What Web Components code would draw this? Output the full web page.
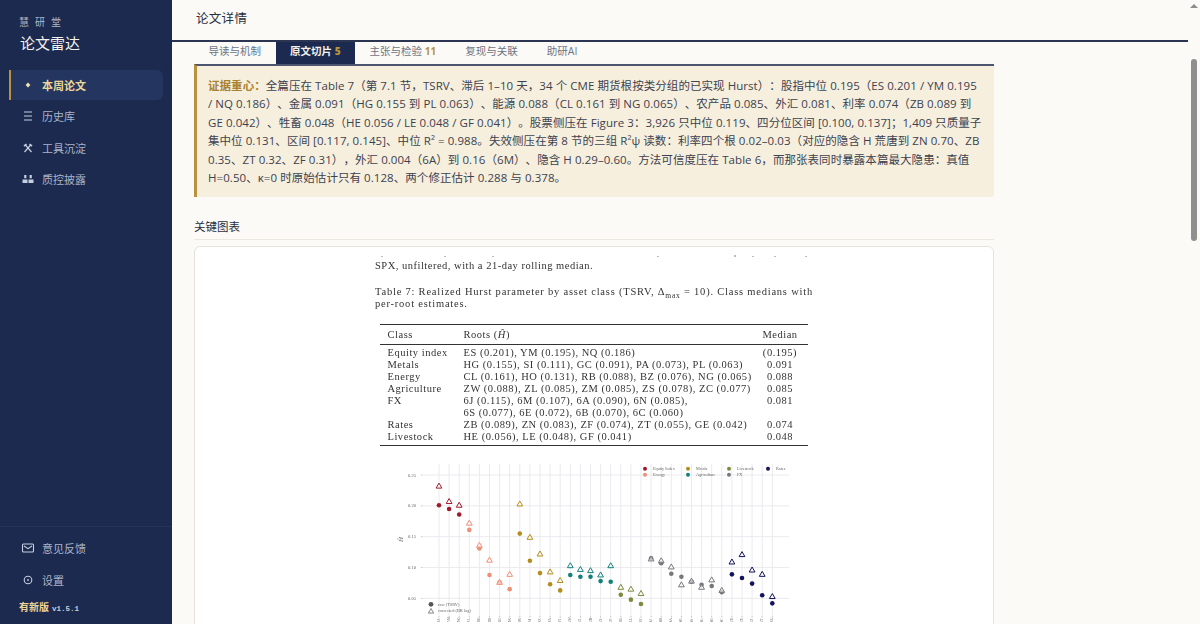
<!DOCTYPE html>
<html lang="zh">
<head>
<meta charset="utf-8">
<title>论文雷达</title>
<style>
  html, body { margin: 0; height: 100%; overflow: hidden; }
  body { font-family: "Open Sans", "Noto Sans CJK SC", sans-serif; text-spacing-trim: space-all; }
</style>
</head>
<body>
<app-shell>
  <side-bar slot="side"></side-bar>
  <page-header slot="main"></page-header>
  <tab-bar slot="main"></tab-bar>
  <evidence-note slot="main"></evidence-note>
  <section-title slot="main">关键图表</section-title>
  <figure-card slot="main"></figure-card>
</app-shell>

<script>
const SERIF = `"Liberation Serif", "Noto Sans CJK SC", serif`;

class AppShell extends HTMLElement {
  constructor() {
    super();
    this.attachShadow({ mode: 'open' }).innerHTML = `
      <style>
        :host { display: flex; height: 624px; background: #fbfaf7; }
        .side { flex: 0 0 172px; display: flex; }
        .main { flex: 1; min-width: 0; overflow: hidden; display: flex; flex-direction: column; }
        ::slotted(*) { flex: none; }
        .bar { flex: 0 0 12px; }
        .up { width: 0; height: 0; border: 4px solid transparent; border-top: 0; border-bottom-color: #8c8c8c;
              margin: 4px auto 0; }
        .thumb { width: 6px; height: 182px; margin: 51px auto 0; border-radius: 3px; background: #8f8f8f; }
      </style>
      <div class="side"><slot name="side"></slot></div>
      <div class="main"><slot name="main"></slot></div>
      <div class="bar"><div class="up"></div><div class="thumb"></div></div>`;
  }
}

const NAV_ICONS = {
  star: `<path d="M7 4.6 9.4 7 7 9.4 4.6 7Z" fill="currentColor"/>`,
  list: `<path d="M3 3h8M3 7h8M3 11h8" stroke="currentColor" stroke-width="1.1" fill="none"/>`,
  tools: `<path d="M4 3.5 10.5 11M10 3.5 3.5 11" stroke="currentColor" stroke-width="1.2" fill="none"/><path d="M2.5 4.5 5 2.5 6 3.5 3.5 5.8ZM11.5 4.5 9 2.5 8 3.5 10.5 5.8Z" fill="currentColor"/>`,
  scale: `<path d="M3.2 3h2.2v3.2H3.2ZM8.6 3h2.2v3.2H8.6ZM1.5 7.4h5V11h-5ZM7.5 7.4h5V11h-5Z" fill="currentColor"/>`,
  mail: `<rect x="1.5" y="3" width="11" height="8" rx="1" stroke="currentColor" stroke-width="1.1" fill="none"/><path d="M3 5 7 7.6 11 5" stroke="currentColor" stroke-width="1.1" fill="none"/>`,
  gear: `<circle cx="7" cy="7" r="3.8" stroke="currentColor" stroke-width="1.1" fill="none"/><circle cx="7" cy="7" r=".9" fill="currentColor"/>`
};

class NavItem extends HTMLElement {
  constructor() {
    super();
    const active = this.hasAttribute('active');
    this.attachShadow({ mode: 'open' }).innerHTML = `
      <style>
        :host { display: flex; align-items: center; gap: 7px; height: 30px; margin-bottom: 1.4px; padding-left: 10px;
                border-radius: 0 6px 6px 0; color: #a9b4cb; font-size: 11px; box-sizing: border-box; border-left: 2px solid transparent; }
        :host([active]) { background: #243660; border-left-color: #b8923e; color: #ecd596; font-weight: 700; }
        svg { width: 14px; height: 14px; flex: none; color: ${active ? '#f0e2b8' : '#c6cfe0'}; }
      </style>
      <svg viewBox="0 0 14 14">${NAV_ICONS[this.getAttribute('icon')]}</svg>
      <slot></slot>`;
  }
}

class SideBar extends HTMLElement {
  constructor() {
    super();
    this.attachShadow({ mode: 'open' }).innerHTML = `
      <style>
        :host { display: flex; flex-direction: column; width: 172px; height: 624px; background: #1b2a4e; box-sizing: border-box; }
        .brand { padding: 16px 20px 0 19px; height: 70px; box-sizing: border-box; }
        .org { font: 10px/13px ${SERIF}; letter-spacing: 6px; color: #aeb8cc; }
        .name { font: 15px/22px ${SERIF}; margin: 4px 0 0 1px; color: #f4f2ea; }
        nav { padding: 0 9px; }
        .foot { margin-top: auto; padding: 6px 9px 0; border-top: 1px solid #24345a; }
        .foot nav-item { margin-bottom: 2px; }
        .ver { padding: 5px 0 9px 10px; font: 700 7.5px/12px "Liberation Mono", monospace; color: #c9cdd6; }
        .ver b { font: 700 10px/12px ${SERIF}; color: #ecd596; margin-right: 3px; }
      </style>
      <div class="brand"><div class="org">慧研堂</div><div class="name">论文雷达</div></div>
      <nav>
        <nav-item icon="star" active>本周论文</nav-item>
        <nav-item icon="list">历史库</nav-item>
        <nav-item icon="tools">工具沉淀</nav-item>
        <nav-item icon="scale">质控披露</nav-item>
      </nav>
      <div class="foot">
        <nav-item icon="mail">意见反馈</nav-item>
        <nav-item icon="gear">设置</nav-item>
        <div class="ver"><b>有新版</b>v1.5.1</div>
      </div>`;
  }
}

class PageHeader extends HTMLElement {
  constructor() {
    super();
    this.attachShadow({ mode: 'open' }).innerHTML = `
      <style>
        :host { display: block; height: 42px; box-sizing: border-box; border-bottom: 2px solid #2b3552;
                padding: 10px 0 0 24px; font: 12.5px/18px ${SERIF}; letter-spacing: .3px; color: #2a2f3d; }
      </style>论文详情`;
  }
}

class TabBar extends HTMLElement {
  constructor() {
    super();
    const tabs = [['导读与机制'], ['原文切片', '5', 1], ['主张与检验', '11'], ['复现与关联'], ['助研AI']];
    this.attachShadow({ mode: 'open' }).innerHTML = `
      <style>
        :host { display: flex; height: 22px; margin-left: 22px; width: 800px; font-size: 10.5px; line-height: 19px; color: #6d7482; }
        div { padding: 0 14.5px; }
        .on { background: #1b2a4e; color: #f4f2ea; font-weight: 700; }
        b { color: #b8923e; font-size: 10px; }
      </style>
      ${tabs.map(t => `<div class="${t[2] ? 'on' : ''}">${t[0]}${t[1] ? ` <b>${t[1]}</b>` : ''}</div>`).join('')}`;
  }
}

class EvidenceNote extends HTMLElement {
  constructor() {
    super();
    this.attachShadow({ mode: 'open' }).innerHTML = `
      <style>
        :host { display: block; width: 800px; margin-left: 22px; box-sizing: border-box; height: 133px;
                background: #f6efde; border-top: 2px solid #4c566e; border-left: 3px solid #b8923e; border-radius: 0 0 3px 0;
                padding: 11px 11px; font-size: 11.5px; line-height: 18.4px; letter-spacing: .06px; white-space: nowrap; color: #3d424f; }
        b { color: #a9812f; }
      </style>
      <b>证据重心：</b>全篇压在 Table 7（第 7.1 节，TSRV、滞后 1–10 天，34 个 CME 期货根按类分组的已实现 Hurst）：股指中位 0.195（ES 0.201 / YM 0.195<br>/ NQ 0.186）、金属 0.091（HG 0.155 到 PL 0.063）、能源 0.088（CL 0.161 到 NG 0.065）、农产品 0.085、外汇 0.081、利率 0.074（ZB 0.089 到<br>GE 0.042）、牲畜 0.048（HE 0.056 / LE 0.048 / GF 0.041）。股票侧压在 Figure 3：3,926 只中位 0.119、四分位区间 [0.100, 0.137]；1,409 只质量子<br>集中位 0.131、区间 [0.117, 0.145]、中位 R² = 0.988。失效侧压在第 8 节的三组 R²ψ 读数：利率四个根 0.02–0.03（对应的隐含 H 荒唐到 ZN 0.70、ZB<br>0.35、ZT 0.32、ZF 0.31），外汇 0.004（6A）到 0.16（6M）、隐含 H 0.29–0.60。方法可信度压在 Table 6，而那张表同时暴露本篇最大隐患：真值<br>H=0.50、κ=0 时原始估计只有 0.128、两个修正估计 0.288 与 0.378。`;
  }
}

class SectionTitle extends HTMLElement {
  constructor() {
    super();
    this.attachShadow({ mode: 'open' }).innerHTML = `
      <style>
        :host { display: block; width: 800px; margin: 21px 0 6px 22px; height: 22px; box-sizing: border-box;
                border-bottom: 1px solid #ebe8e0; padding-top: 1px; font: 11.5px/17px ${SERIF}; color: #2a2f3d; }
      </style><slot></slot>`;
  }
}

// 图表数据：[根, 原始, 修正]，颜色按资产类
const SERIES = [
  ['#9e1b2c', [['ES', .201, .232], ['YM', .195, .207], ['NQ', .186, .201]]],
  ['#ee8f78', [['CL', .161, .172], ['HO', .131, .136], ['RB', .088, .112], ['BZ', .076, .076], ['NG', .065, .089]]],
  ['#b58d1c', [['HG', .155, .203], ['SI', .111, .149], ['GC', .091, .122], ['PA', .073, .093], ['PL', .063, .079]]],
  ['#14807a', [['ZW', .088, .103], ['ZL', .085, .097], ['ZM', .085, .095], ['ZS', .078, .088], ['ZC', .077, .103]]],
  ['#7e8a3e', [['HE', .056, .068], ['LE', .048, .065], ['GF', .041, .058]]],
  ['#77777e', [['6J', .115, .114], ['6M', .107, .111], ['6A', .090, .101], ['6N', .085, .072], ['6S', .077, .078], ['6E', .072, .068], ['6B', .070, .080], ['6C', .060, .063]]],
  ['#12125e', [['ZB', .089, .109], ['ZN', .083, .121], ['ZF', .074, .096], ['ZT', .055, .089], ['GE', .042, .053]]]
];

class HurstChart extends HTMLElement {
  constructor() {
    super();
    // 坐标相对卡片内的图：x0=图左边 380，y0=图顶 460
    const X0 = 380, Y0 = 460;
    const yOf = v => 476 + (0.25 - v) * 617 - Y0;
    const xOf = i => 438 + i * 10.1 - X0;
    let grid = '', dots = '', idx = 0;
    for (let i = 0; i < 34; i++) grid += `<path d="M${xOf(i)} 5V157" stroke="#e9e9ed" stroke-width=".9"/>`;
    for (const v of [.25, .2, .15, .1, .05]) {
      grid += `<path d="M${xOf(0) - 16} ${yOf(v)}H408" stroke="#e9e9ed" stroke-width=".9"/>
               <text x="27" y="${yOf(v) + 1.5}" font-size="4.6">${v.toFixed(2)}</text>
               <path d="M${xOf(0) - 18} ${yOf(v)}h1.5" stroke="#888" stroke-width=".5"/>`;
    }
    for (const [color, pts] of SERIES) {
      for (const [root, raw, cor] of pts) {
        const x = xOf(idx), y = yOf(cor);
        dots += `<circle cx="${x}" cy="${yOf(raw)}" r="2.3" fill="${color}"/>
                 <path d="M${x} ${y - 3}l2.9 5h-5.8Z" fill="#fff" fill-opacity=".55" stroke="${color}" stroke-width="1"/>`;
        grid += `<path d="M${x} 157v1.5" stroke="#888" stroke-width=".5"/>
                 <text font-size="3" transform="translate(${x + 1} 163) rotate(-90)">${root}</text>`;
        idx++;
      }
    }
    const legend = [['#9e1b2c', 'Equity Index', 644, 9.7], ['#ee8f78', 'Energy', 644, 15.7], ['#b58d1c', 'Metals', 687, 9.7],
      ['#14807a', 'Agriculture', 687, 15.7], ['#7e8a3e', 'Livestock', 728, 9.7], ['#77777e', 'FX', 728, 15.7], ['#12125e', 'Rates', 767, 9.7]];
    const legendSvg = legend.map(([c, t, x, y]) => `<circle cx="${x - X0}" cy="${y}" r="2" fill="${c}"/>
      <text x="${x - X0 + 8}" y="${y + 1.3}" font-size="4.2">${t}</text>`).join('');
    this.attachShadow({ mode: 'open' }).innerHTML = `
      <style>
        :host { display: block; width: 420px; height: 164px; margin: 13px 0 0 186px; }
        svg { display: block; filter: blur(.3px); }
        text { font-family: "Liberation Serif", serif; fill: #666; }
      </style>
      <svg width="420" height="164" viewBox="0 0 420 164">
        ${grid}
        ${dots}
        ${legendSvg}
        <text transform="translate(22 83) rotate(-90)" font-size="7" font-style="italic">Ĥ</text>
        <circle cx="50" cy="145.3" r="2.4" fill="#555"/>
        <path d="M50 149.5l2.6 4.6h-5.2Z" fill="none" stroke="#555" stroke-width=".7"/>
        <text x="57" y="147" font-size="4.4">raw (TSRV)</text>
        <text x="57" y="153.4" font-size="4.4">corrected (BK lag)</text>
      </svg>`;
  }
}

class ResultTable extends HTMLElement {
  constructor() {
    super();
    const rows = [
      ['Equity index', 'ES (0.201), YM (0.195), NQ (0.186)', '(0.195)'],
      ['Metals', 'HG (0.155), SI (0.111), GC (0.091), PA (0.073), PL (0.063)', '0.091'],
      ['Energy', 'CL (0.161), HO (0.131), RB (0.088), BZ (0.076), NG (0.065)', '0.088'],
      ['Agriculture', 'ZW (0.088), ZL (0.085), ZM (0.085), ZS (0.078), ZC (0.077)', '0.085'],
      ['FX', '6J (0.115), 6M (0.107), 6A (0.090), 6N (0.085),', '0.081'],
      ['', '6S (0.077), 6E (0.072), 6B (0.070), 6C (0.060)', ''],
      ['Rates', 'ZB (0.089), ZN (0.083), ZF (0.074), ZT (0.055), GE (0.042)', '0.074'],
      ['Livestock', 'HE (0.056), LE (0.048), GF (0.041)', '0.048']
    ];
    this.attachShadow({ mode: 'open' }).innerHTML = `
      <style>
        :host { display: block; width: 428px; margin: 14px 0 0 5px; font-size: 10.5px; color: #333;
                border-top: 1.5px solid #333; border-bottom: 1.5px solid #333; box-sizing: border-box; padding-bottom: 2px; }
        .row { display: grid; grid-template-columns: 76px 1fr 56px; padding-left: 7.5px; height: 12.05px; line-height: 12px; white-space: nowrap; letter-spacing: .52px; }
        .row div:last-child { text-align: center; }
        .head { height: 19px; line-height: 19px; border-bottom: 1px solid #333; margin-bottom: 2px; }
        i { font-style: italic; }
      </style>
      <div class="row head"><div>Class</div><div>Roots (<i>Ĥ</i>)</div><div>Median</div></div>
      ${rows.map(r => `<div class="row"><div>${r[0]}</div><div>${r[1]}</div><div>${r[2]}</div></div>`).join('')}`;
  }
}

class FigureCard extends HTMLElement {
  constructor() {
    super();
    this.attachShadow({ mode: 'open' }).innerHTML = `
      <style>
        :host { display: block; width: 800px; margin-left: 22px; height: 400px; box-sizing: border-box; overflow: hidden;
                background: #fff; border: 1px solid #e6e3db; border-radius: 6px; font-family: "Liberation Serif", serif; color: #333; }
        .page { width: 437px; margin-left: 180px; filter: blur(.3px); }
        .cut { display: block; height: 13px; }
        p { margin: 0; font-size: 10.5px; line-height: 12px; letter-spacing: .5px; white-space: nowrap; }
        .cap { margin-top: 14px; letter-spacing: .78px; }
        sub { font-size: 7.5px; line-height: 0; }
      </style>
      <div class="page">
        <svg class="cut" width="437" height="13" viewBox="0 0 437 13"><path d="M7 9v1M70 9v1M118 9v1M283 9v1M360 8v2M378 9v1M400 9v1M431 9v1" stroke="#777" stroke-width="1"/></svg>
        <p>SPX, unfiltered, with a 21-day rolling median.</p>
        <p class="cap">Table 7: Realized Hurst parameter by asset class (TSRV, Δ<sub>max</sub> = 10). Class medians with<br>per-root estimates.</p>
        <result-table></result-table>
      </div>
      <hurst-chart></hurst-chart>`;
  }
}

customElements.define('nav-item', NavItem);
customElements.define('side-bar', SideBar);
customElements.define('page-header', PageHeader);
customElements.define('tab-bar', TabBar);
customElements.define('evidence-note', EvidenceNote);
customElements.define('section-title', SectionTitle);
customElements.define('result-table', ResultTable);
customElements.define('hurst-chart', HurstChart);
customElements.define('figure-card', FigureCard);
customElements.define('app-shell', AppShell);
</script>
</body>
</html>
